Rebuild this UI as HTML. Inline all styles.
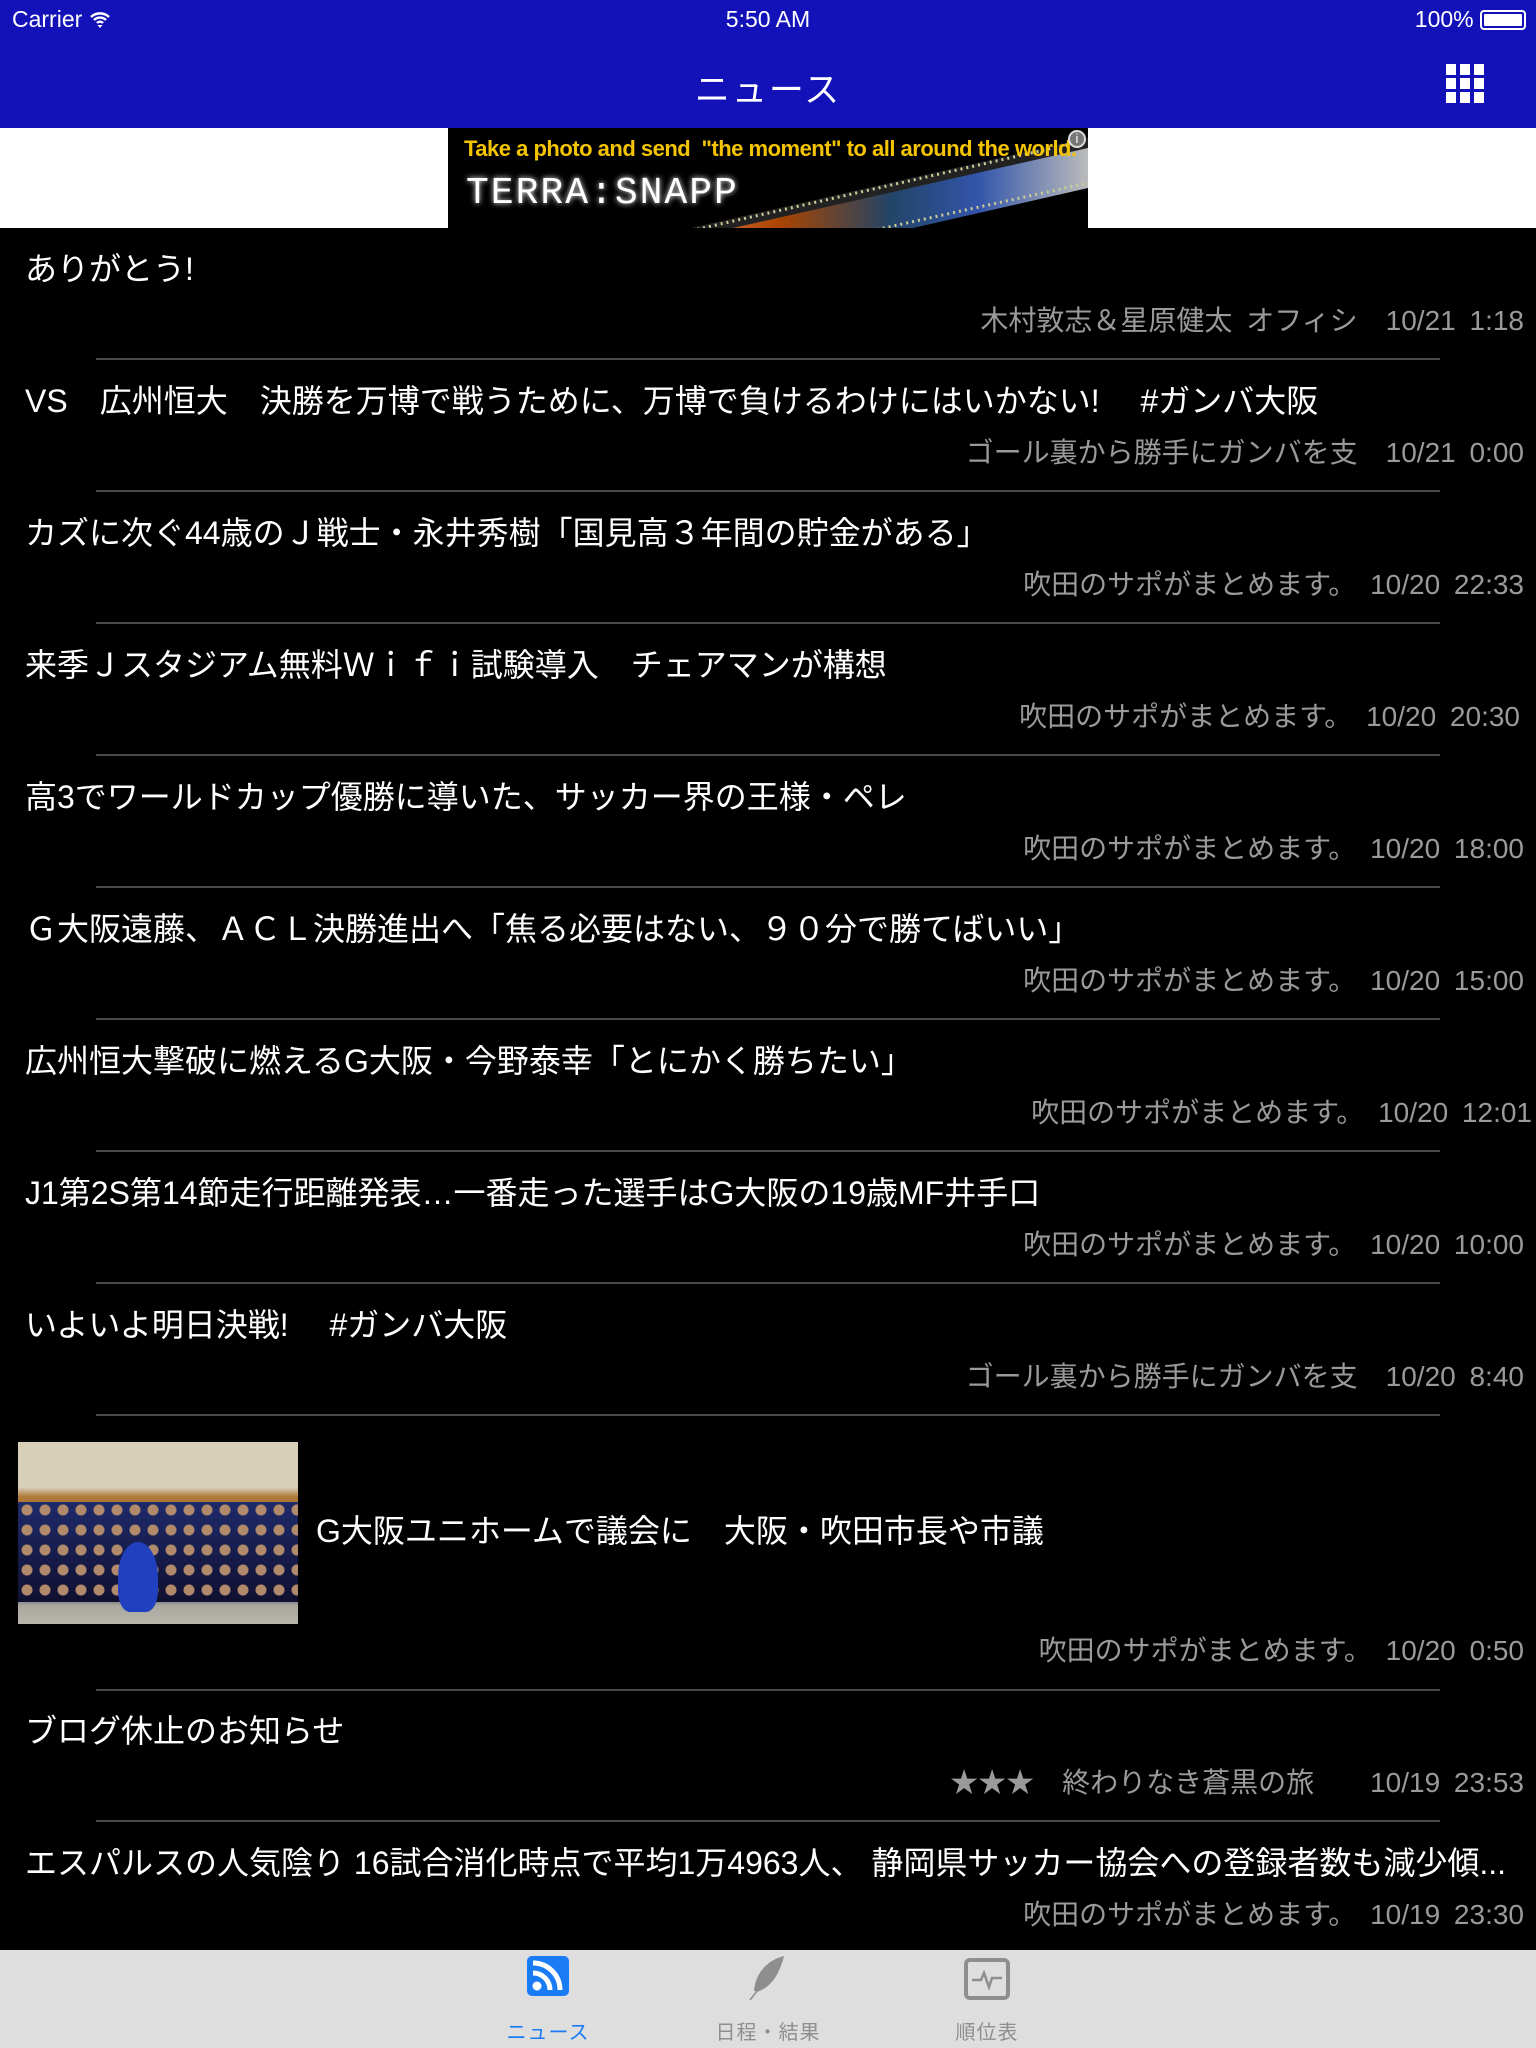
<!DOCTYPE html>
<html><head><meta charset="utf-8"><style>
*{margin:0;padding:0;box-sizing:border-box}
body{width:1536px;height:2048px;background:#000;font-family:"Liberation Sans","Noto Sans CJK JP",sans-serif;position:relative;overflow:hidden}
.nav{position:absolute;left:0;top:0;width:1536px;height:128px;background:#1212b8;color:#fff}
.sb{position:absolute;top:6px;font-size:23px}
.ttl{position:absolute;top:62px;width:100%;text-align:center;font-size:35px;letter-spacing:2px}
.grid{position:absolute;left:1446px;top:64px;width:38px;height:40px;display:grid;grid-template-columns:repeat(3,10px);grid-template-rows:repeat(3,11px);gap:3px 4px}
.grid i{background:#fff}
.adw{position:absolute;left:0;top:128px;width:1536px;height:100px;background:#fff}
.ad{position:absolute;left:448px;top:0;width:640px;height:100px;background:#000;overflow:hidden}
.row{position:absolute;left:0;width:1536px}
.t{position:absolute;left:25px;color:#fff;font-size:32px;white-space:nowrap}
.m{position:absolute;right:12px;color:#9a9a9a;font-size:28px;white-space:nowrap;word-spacing:6px}
.sep{position:absolute;left:96px;width:1344px;height:2px;background:#4a4a4a}
.tab{position:absolute;left:0;top:1950px;width:1536px;height:98px;background:#dedede}
.tl{position:absolute;top:66px;font-size:20px;width:200px;text-align:center;letter-spacing:1px}
</style></head><body>
<div class="nav">
 <div class="sb" style="left:12px">Carrier <svg width="22" height="18" viewBox="0 0 22 18" style="vertical-align:-1px"><path d="M2 7a13 13 0 0 1 18 0M5 10a8.5 8.5 0 0 1 12 0M8 13a4 4 0 0 1 6 0" stroke="#fff" stroke-width="2.4" fill="none"/><path d="M11 18l-2.5-3h5z" fill="#fff"/></svg></div>
 <div class="sb" style="left:0;width:100%;text-align:center;font-size:23px">5:50 AM</div>
 <div class="sb" style="right:10px">100% <span style="display:inline-block;width:46px;height:20px;border:2px solid #fff;border-radius:4px;vertical-align:-3px;padding:2px;position:relative"><span style="display:block;width:100%;height:100%;background:#fff;border-radius:1px"></span></span></div>
 <div class="ttl">ニュース</div>
 <div class="grid"><i></i><i></i><i></i><i></i><i></i><i></i><i></i><i></i><i></i></div>
</div>
<div class="adw"><div class="ad">
 <svg width="640" height="100" style="position:absolute;left:0;top:0">
  <defs><linearGradient id="f" x1="0" x2="1"><stop offset="0" stop-color="#f86" /><stop offset=".3" stop-color="#a40"/><stop offset=".55" stop-color="#246"/><stop offset=".75" stop-color="#35a"/><stop offset="1" stop-color="#bbb"/></linearGradient></defs>
  <polygon points="200,110 640,10 640,60 290,140" fill="url(#f)"/>
  <polygon points="200,110 640,10 640,20 205,118" fill="#222"/>
  <polyline points="220,108 640,12" stroke="#cc9" stroke-width="3" stroke-dasharray="2 4"/>
  <polyline points="300,130 640,55" stroke="#cc9" stroke-width="3" stroke-dasharray="2 4"/>
 </svg>
 <div style="position:absolute;left:16px;top:8px;color:#f5c400;font-weight:bold;font-size:22px;letter-spacing:-0.5px;white-space:nowrap">Take a photo and send &nbsp;"the moment" to all around the world.</div>
 <div style="position:absolute;left:18px;top:44px;color:#fff;font-family:'Liberation Mono',monospace;font-size:38px;letter-spacing:2px;text-shadow:0 0 6px #fff">TERRA:SNAPP</div>
 <div style="position:absolute;right:2px;top:2px;width:18px;height:18px;border-radius:50%;border:2px solid #ddd;background:#777;color:#fff;font-size:13px;text-align:center;line-height:14px">i</div>
</div></div>

<div class="row" style="top:228px"><div class="t" style="top:16px">ありがとう!</div><div class="m" style="top:71px">木村敦志＆星原健太 オフィシ　10/21 1:18</div><div class="sep" style="top:130px"></div></div>
<div class="row" style="top:360px"><div class="t" style="top:16px">VS　広州恒大　決勝を万博で戦うために、万博で負けるわけにはいかない!　 #ガンバ大阪</div><div class="m" style="top:71px">ゴール裏から勝手にガンバを支　10/21 0:00</div><div class="sep" style="top:130px"></div></div>
<div class="row" style="top:492px"><div class="t" style="top:16px">カズに次ぐ44歳のＪ戦士・永井秀樹「国見高３年間の貯金がある」</div><div class="m" style="top:71px">吹田のサポがまとめます。 10/20 22:33</div><div class="sep" style="top:130px"></div></div>
<div class="row" style="top:624px"><div class="t" style="top:16px">来季Ｊスタジアム無料Ｗｉｆｉ試験導入　チェアマンが構想</div><div class="m" style="top:71px;right:16px">吹田のサポがまとめます。 10/20 20:30</div><div class="sep" style="top:130px"></div></div>
<div class="row" style="top:756px"><div class="t" style="top:16px">高3でワールドカップ優勝に導いた、サッカー界の王様・ペレ</div><div class="m" style="top:71px">吹田のサポがまとめます。 10/20 18:00</div><div class="sep" style="top:130px"></div></div>
<div class="row" style="top:888px"><div class="t" style="top:16px">Ｇ大阪遠藤、ＡＣＬ決勝進出へ「焦る必要はない、９０分で勝てばいい」</div><div class="m" style="top:71px">吹田のサポがまとめます。 10/20 15:00</div><div class="sep" style="top:130px"></div></div>
<div class="row" style="top:1020px"><div class="t" style="top:16px">広州恒大撃破に燃えるG大阪・今野泰幸「とにかく勝ちたい」</div><div class="m" style="top:71px;right:4px">吹田のサポがまとめます。 10/20 12:01</div><div class="sep" style="top:130px"></div></div>
<div class="row" style="top:1152px"><div class="t" style="top:16px">J1第2S第14節走行距離発表…一番走った選手はG大阪の19歳MF井手口</div><div class="m" style="top:71px">吹田のサポがまとめます。 10/20 10:00</div><div class="sep" style="top:130px"></div></div>
<div class="row" style="top:1284px"><div class="t" style="top:16px">いよいよ明日決戦!　 #ガンバ大阪</div><div class="m" style="top:71px">ゴール裏から勝手にガンバを支　10/20 8:40</div><div class="sep" style="top:130px"></div></div>
<div class="row" style="top:1416px">
 <div style="position:absolute;left:18px;top:26px;width:280px;height:182px;overflow:hidden;background:linear-gradient(#d8cfb8 0,#d8cfb8 25%,#b07a3a 30%,#a06a30 45%,#1a1f3a 50%,#14183a 80%,#a9a89e 90%,#b8b6ac 100%)">
  <div style="position:absolute;left:0;top:60px;width:280px;height:100px;background:radial-gradient(circle at 50% 40%,#b08a6a 5px,transparent 6px) 0 0/18px 20px,linear-gradient(#1e2a6a,#101030)"></div>
  <div style="position:absolute;left:100px;top:100px;width:40px;height:70px;background:#2040c0;border-radius:50% 50% 30% 30%"></div>
 </div>
 <div class="t" style="top:90px;left:316px">G大阪ユニホームで議会に　大阪・吹田市長や市議</div>
 <div class="m" style="top:213px">吹田のサポがまとめます。 10/20 0:50</div><div class="sep" style="top:273px"></div></div>
<div class="row" style="top:1690px"><div class="t" style="top:16px">ブログ休止のお知らせ</div><div class="m" style="top:71px">★★★　終わりなき蒼黒の旅　　10/19 23:53</div><div class="sep" style="top:130px"></div></div>
<div class="row" style="top:1822px"><div class="t" style="top:16px">エスパルスの人気陰り 16試合消化時点で平均1万4963人、 静岡県サッカー協会への登録者数も減少傾...</div><div class="m" style="top:71px">吹田のサポがまとめます。 10/19 23:30</div></div>

<div class="tab">
 <svg width="42" height="44" style="position:absolute;left:527px;top:6px" viewBox="0 0 42 44"><rect x="0" y="0" width="42" height="40" rx="5" fill="#1a7cf5"/><circle cx="10" cy="30" r="4.5" fill="#fff"/><path d="M6 17a17 17 0 0 1 17 17M6 7a27 27 0 0 1 27 27" stroke="#fff" stroke-width="5" fill="none"/></svg>
 <svg width="42" height="50" style="position:absolute;left:746px;top:4px" viewBox="0 0 42 50"><path d="M38 2C22 6 10 18 8 36l2 2C26 34 34 18 38 2z" fill="#8e8e8e"/><path d="M34 8L4 46" stroke="#8e8e8e" stroke-width="1.5"/></svg>
 <svg width="46" height="42" style="position:absolute;left:964px;top:8px" viewBox="0 0 46 42"><rect x="2" y="2" width="42" height="38" rx="4" fill="none" stroke="#8e8e8e" stroke-width="4"/><path d="M8 22h9l3-7 5 14 3-9h10" stroke="#8e8e8e" stroke-width="2.5" fill="none"/></svg>
 <div class="tl" style="left:448px;color:#1a7cf5">ニュース</div>
 <div class="tl" style="left:668px;color:#8e8e8e">日程・結果</div>
 <div class="tl" style="left:887px;color:#8e8e8e">順位表</div>
</div>
</body></html>
